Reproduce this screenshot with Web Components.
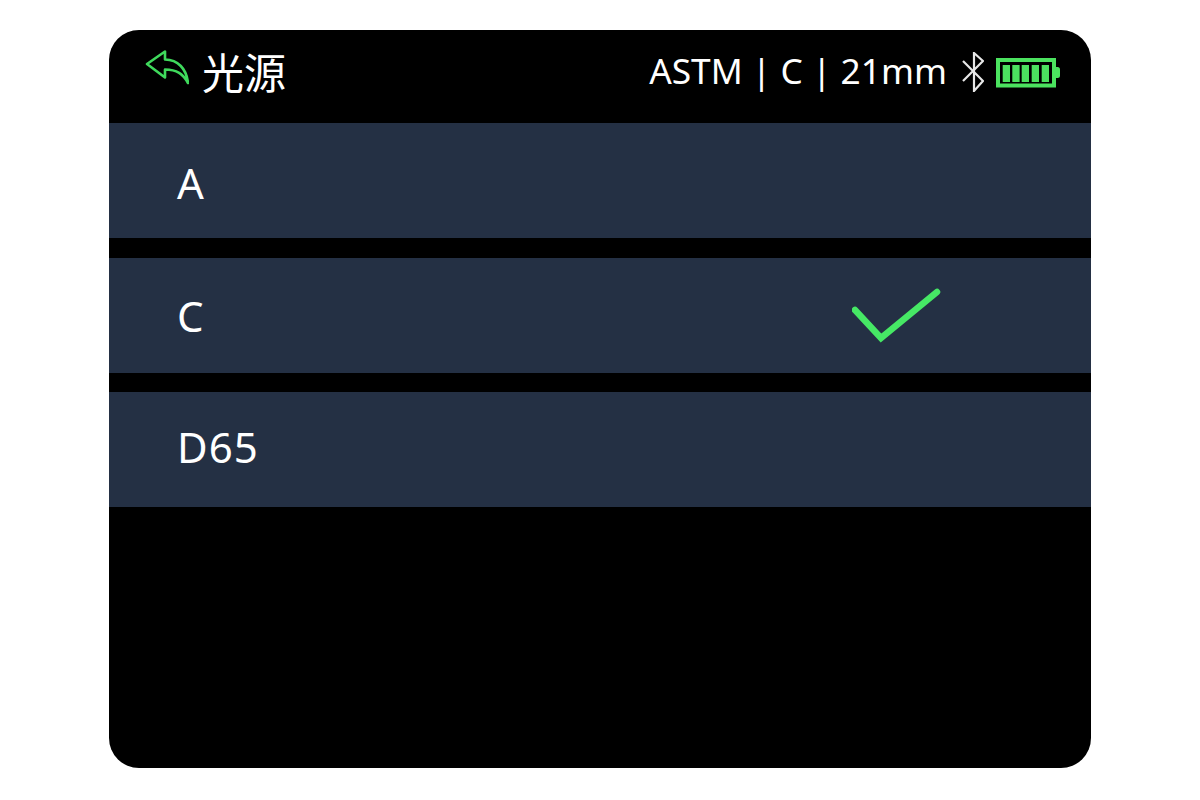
<!DOCTYPE html>
<html lang="zh">
<head>
<meta charset="utf-8">
<title>光源</title>
<style>
  html, body { margin: 0; background: #fff; }
  body { width: 1200px; height: 800px; overflow: hidden; font-family: "Noto Sans", "Noto Sans CJK SC", sans-serif; }
</style>
</head>
<body>
<device-screen>
  <status-bar slot="header" title-text="光源" info="ASTM | C | 21mm"></status-bar>
  <option-row label="A" style="--nudge: 1.5px"></option-row>
  <option-row label="C" style="--nudge: 0.5px" checked></option-row>
  <option-row label="D65" style="--nudge: -3px"></option-row>
</device-screen>

<script>
class DeviceScreen extends HTMLElement {
  constructor() {
    super();
    this.attachShadow({mode: "open"});
    this.shadowRoot.innerHTML = `
      <style>
        :host {
          display: block;
          box-sizing: border-box;
          width: 982px;
          height: 738px;
          margin: 30px 0 0 109px;
          background: #000;
          border-radius: 30px;
          overflow: hidden;
          color: #fff;
        }
        .rows {
          display: flex;
          flex-direction: column;
          gap: 19.5px;
        }
      </style>
      <slot name="header"></slot>
      <div class="rows"><slot></slot></div>
    `;
  }
}

class StatusBar extends HTMLElement {
  constructor() {
    super();
    this.attachShadow({mode: "open"});
    this.shadowRoot.innerHTML = `
      <style>
        :host {
          display: flex;
          align-items: center;
          justify-content: space-between;
          height: 85px;
          padding: 0 31px 8px 36px;
        }
        .left, .right { display: flex; align-items: center; }
        .title {
          font: 400 42px/1 "Noto Sans CJK SC", sans-serif;
          margin: 0 0 4px 13px;
        }
        .info {
          font: 400 35.3px/1 "Noto Sans", sans-serif;
          white-space: pre;
          margin-bottom: 3px;
        }
        svg { display: block; }
        .back { margin-top: -11px; }
        .bt { margin: -1px 12px 0 15px; }
      </style>
      <div class="left">
        <svg class="back" width="44" height="35" viewBox="0 0 44 35" fill="none" stroke="#3fd95c" stroke-width="2.600" stroke-linejoin="round" stroke-linecap="round">
          <path d="M2 14 L20 1.500 V9.500 C33 9.500 41.500 19 43 33 C38 24 32 19.500 20 19.500 V27.500 Z"/>
        </svg>
        <span class="title"></span>
      </div>
      <div class="right">
        <span class="info"></span>
        <svg class="bt" width="22" height="40" viewBox="0 0 22 40" fill="none" stroke="#e8e8e8" stroke-width="2.200">
          <path d="M1 9 L21 29 L12 39 V1 L21 9 L1 29"/>
        </svg>
        <svg width="64" height="30" viewBox="0 0 64 30">
          <rect x="2" y="2" width="56" height="25.500" fill="none" stroke="#4be35f" stroke-width="4"/>
          <g fill="#4be35f">
            <rect x="6.700" y="7" width="7.300" height="17"/>
            <rect x="16.300" y="7" width="7.300" height="17"/>
            <rect x="25.700" y="7" width="7.300" height="17"/>
            <rect x="35.700" y="7" width="7.300" height="17"/>
            <rect x="45.700" y="7" width="7.300" height="17"/>
            <path d="M60 9 h1.500 a2.500 2.500 0 0 1 2.500 2.500 v6 a2.500 2.500 0 0 1 -2.500 2.500 h-1.500 z"/>
          </g>
        </svg>
      </div>
    `;
  }

  connectedCallback() {
    this.shadowRoot.querySelector(".title").textContent = this.getAttribute("title-text");
    this.shadowRoot.querySelector(".info").textContent = this.getAttribute("info");
  }
}

class OptionRow extends HTMLElement {
  constructor() {
    super();
    this.attachShadow({mode: "open"});
    this.shadowRoot.innerHTML = `
      <style>
        :host {
          display: flex;
          align-items: center;
          justify-content: space-between;
          height: 115px;
          padding: 0 149px 0 68px;
          background: #243044;
          font: 400 42px/1 "Noto Sans", sans-serif;
          letter-spacing: 1px;
        }
        .label { transform: translateY(var(--nudge, 0)); }
        svg { display: none; }
        :host([checked]) svg { display: block; }
      </style>
      <span class="label"></span>
      <svg width="90" height="56" viewBox="0 0 90 56" fill="none" stroke="#46e865" stroke-width="6.500" stroke-linecap="round" stroke-linejoin="miter">
        <path d="M3 23 L29 51 L85 5"/>
      </svg>
    `;
  }

  connectedCallback() {
    this.shadowRoot.querySelector(".label").textContent = this.getAttribute("label");
  }
}

customElements.define("device-screen", DeviceScreen);
customElements.define("status-bar", StatusBar);
customElements.define("option-row", OptionRow);
</script>
</body>
</html>
